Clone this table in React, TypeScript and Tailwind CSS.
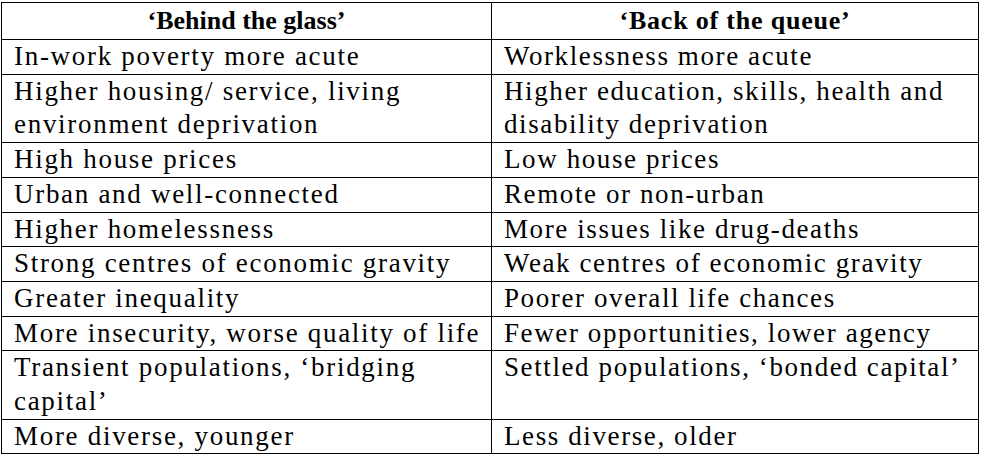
import React from "react";

const rows: [string, string][] = [
  ["In-work poverty more acute", "Worklessness more acute"],
  ["Higher housing/ service, living environment deprivation", "Higher education, skills, health and disability deprivation"],
  ["High house prices", "Low house prices"],
  ["Urban and well-connected", "Remote or non-urban"],
  ["Higher homelessness", "More issues like drug-deaths"],
  ["Strong centres of economic gravity", "Weak centres of economic gravity"],
  ["Greater inequality", "Poorer overall life chances"],
  ["More insecurity, worse quality of life", "Fewer opportunities, lower agency"],
  ["Transient populations, \u2018bridging capital\u2019", "Settled populations, \u2018bonded capital\u2019"],
  ["More diverse, younger", "Less diverse, older"],
];

export default function App() {
  return (
    <div className="w-[982px] h-[457px] bg-white pt-[2px] pl-[1px] overflow-hidden" style={{ fontFamily: '"Liberation Serif", "Times New Roman", serif' }}>
      <table className="border-collapse table-fixed text-black">
        <colgroup>
          <col className="w-[490px]" />
          <col className="w-[487px]" />
        </colgroup>
        <thead>
          <tr className="h-[37px]">
            <th className="border border-black font-bold text-center align-top px-3 text-[26px] leading-[34px] pt-[1px]">{"\u2018Behind the glass\u2019"}</th>
            <th className="border border-black font-bold text-center align-top px-3 text-[26px] leading-[34px] pt-[1px] tracking-[0.8px]">{"\u2018Back of the queue\u2019"}</th>
          </tr>
        </thead>
        <tbody>
          {rows.map((r, i) => (
            <tr key={i}>
              <td className="border border-black align-top pl-[12px] pr-[6px] text-[27px] leading-[33.7px] tracking-[1.7px]">{r[0]}</td>
              <td className="border border-black align-top pl-[12px] pr-[6px] text-[27px] leading-[33.7px] tracking-[1.6px]">{r[1]}</td>
            </tr>
          ))}
        </tbody>
      </table>
    </div>
  );
}
